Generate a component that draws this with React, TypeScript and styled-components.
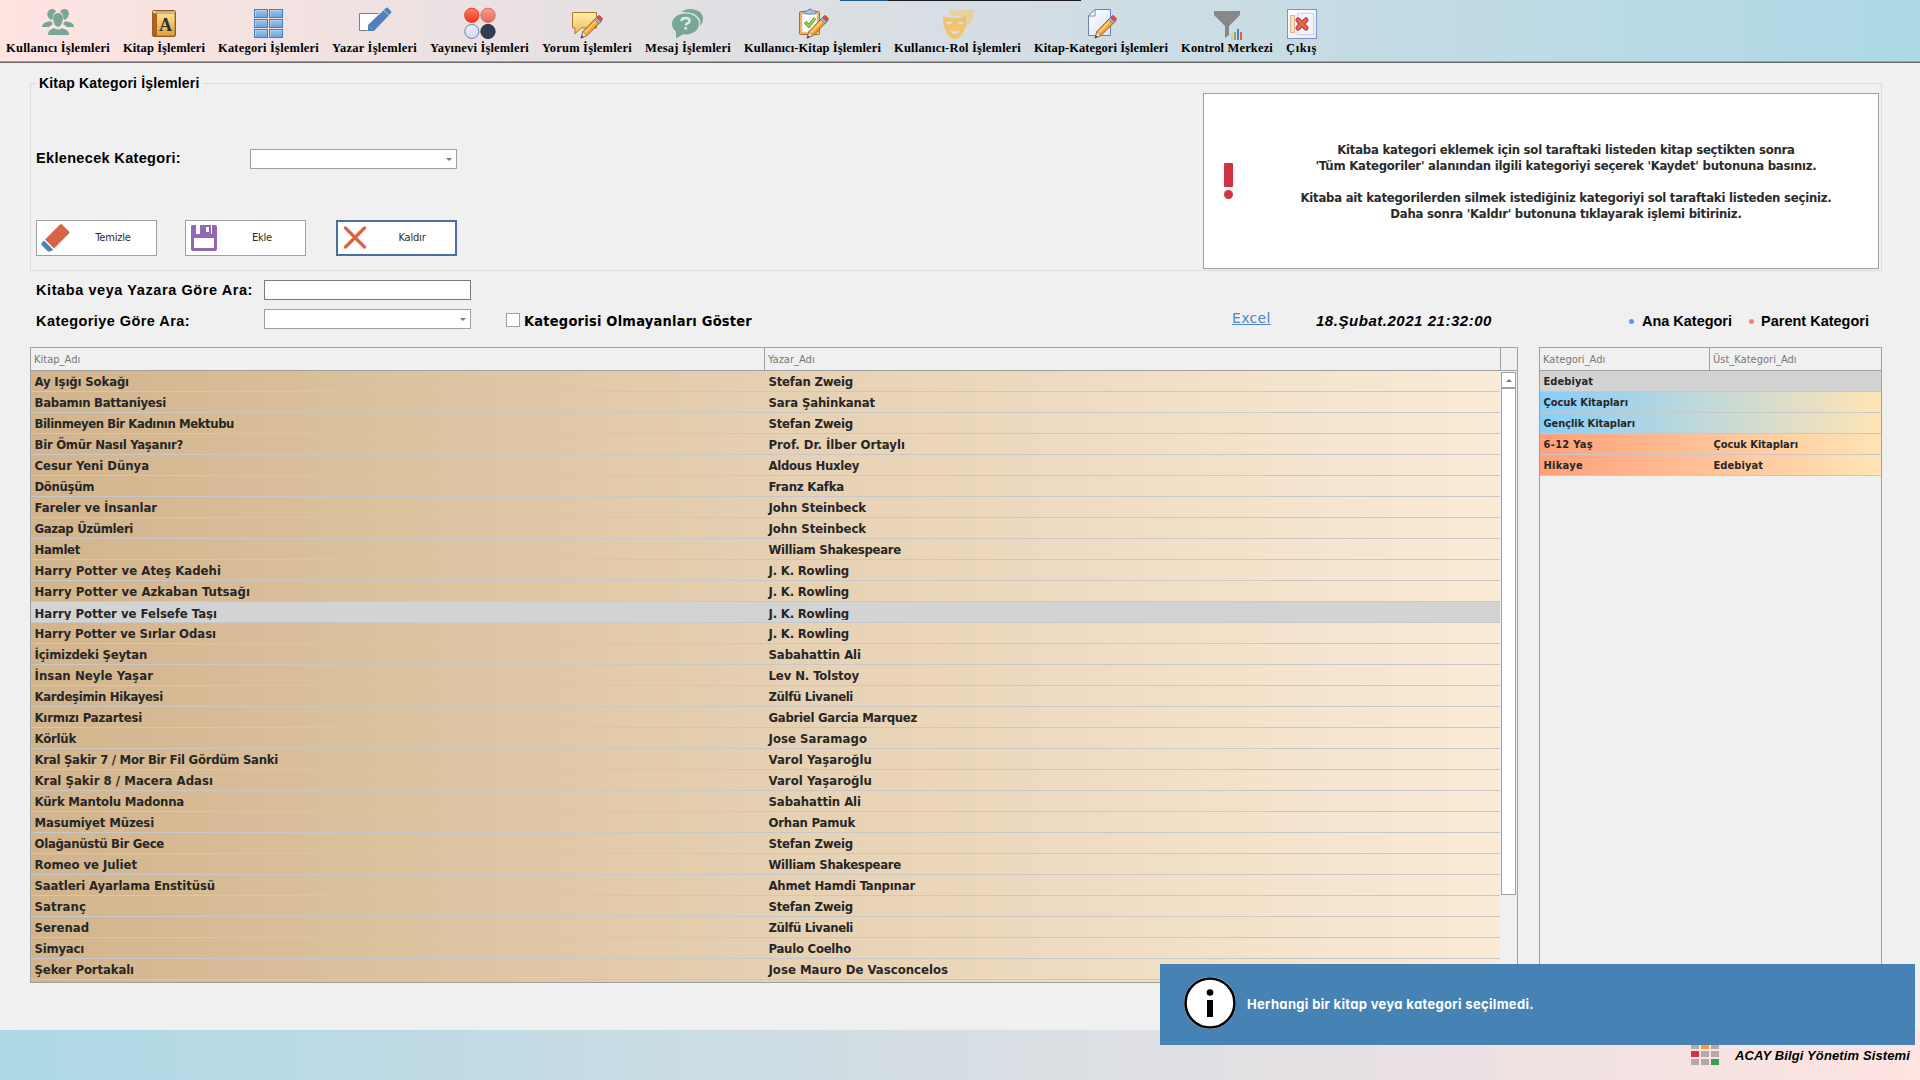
import React, { useLayoutEffect, useRef, useState } from 'react';
import styled, { createGlobalStyle } from 'styled-components';

const tahoma = `'DejaVu Sans Condensed', 'DejaVu Sans', sans-serif`;
const arial = `'Liberation Sans', Arial, sans-serif`;

const Global = createGlobalStyle`
  * { box-sizing: border-box; }
  body { margin: 0; background: #f0f0f0; overflow: hidden; }
`;

/* Tracks a line of text so that it fills the given width. */
const FitSpan = styled.span`
  display: inline-block;
  white-space: nowrap;
`;

function Fit({ width, children }: { width: number; children: string }) {
  const ref = useRef<HTMLSpanElement>(null);
  const [spacing, setSpacing] = useState<number | null>(null);
  useLayoutEffect(() => {
    if (spacing === null && ref.current) {
      const natural = ref.current.getBoundingClientRect().width;
      setSpacing((width - natural) / children.length);
    }
  }, [spacing, width, children]);
  return <FitSpan ref={ref} style={{ letterSpacing: spacing ?? 0 }}>{children}</FitSpan>;
}

const Screen = styled.div`
  position: relative;
  display: flex;
  flex-direction: column;
  width: 1920px;
  height: 1080px;
  background: #f0f0f0;
  color: #000;
  font-family: ${arial};
  overflow: hidden;
`;

/* ---------- toolbar ---------- */

const Toolbar = styled.nav`
  display: flex;
  flex: none;
  gap: 13px;
  height: 63px;
  padding: 7px 0 0 6px;
  background: linear-gradient(90deg, #ffe4e1, #add8e6);
  border-bottom: 1px solid #696969;
  box-shadow: inset 0 -1px 0 #a0a0a0;
`;

const TopEdge = styled.div`
  position: absolute;
  top: 0;
  left: 840px;
  width: 241px;
  height: 1px;
  background: linear-gradient(90deg, #215a80 48px, #1c1a1f 48px);
`;

const ToolItem = styled.div<{ $w: number }>`
  display: flex;
  flex-direction: column;
  align-items: center;
  flex: none;
  width: ${(p) => p.$w}px;
  svg { display: block; flex: none; }
`;

const ToolText = styled.span`
  font: bold 12.500px/16px 'Liberation Serif', 'Times New Roman', serif;
  white-space: nowrap;
  margin-top: -1px;
`;

const Svg = ({ children }: { children: React.ReactNode }) => (
  <svg width="34" height="34" viewBox="0 0 34 34">{children}</svg>
);

const UsersIcon = () => (
  <Svg>
    <g fill="#78a798">
      <path d="M8 3q3-2 6 0l1 2q-3 1-3 5l-1 3q-4-1-5-6zM19 5l1-2q4-2 7 0l1 4q-1 5-5 6l-1-3q0-4-3-5z" />
      <path d="M1 20q0-4 5-5l3-1q2 1 3 3-3 2-4 3zM33 20q0-4-5-5l-3-1q-2 1-3 3 3 2 4 3z" />
      <path d="M17 6q5 0 5 6-1 7-5 8-4-1-5-8 0-6 5-6z" />
      <path d="M7 28q0-5 4-6l2-1q4 3 8 0l2 1q5 1 5 6z" />
    </g>
  </Svg>
);
const BookIcon = () => (
  <Svg>
    <defs>
      <linearGradient id="bk" x1="0" y1="0" x2="0" y2="1"><stop stopColor="#fde18a" /><stop offset="1" stopColor="#e0a03c" /></linearGradient>
    </defs>
    <rect x="5.500" y="3.500" width="23" height="26" rx="1.500" fill="#fff" stroke="#9a5a1c" />
    <path d="M6 6h22v23H6z" fill="url(#bk)" stroke="#9a5a1c" strokeWidth=".8" />
    <path d="M5.500 5q0 2 4.500 1.500V29H7q-1.500 0-1.500-2z" fill="#a8642a" />
    <path d="M8 4.500h19" stroke="#9aa7c0" strokeWidth="1" />
    <text x="18.500" y="24" textAnchor="middle" fontFamily="Liberation Serif, serif" fontWeight="bold" fontSize="18" fill="#2f3238">A</text>
  </Svg>
);
const GridIcon = () => (
  <Svg>
    <defs><linearGradient id="gr" x1="0" y1="0" x2="0" y2="1"><stop stopColor="#9cc6ea" /><stop offset="1" stopColor="#6ba4dc" /></linearGradient></defs>
    {[2.5, 12.5, 22.5].map((y) => [2.5, 17.5].map((x) => (
      <g key={`${x}-${y}`}>
        <rect x={x} y={y} width="13" height="8" fill="url(#gr)" stroke="#3f7cc0" />
        <path d={`M${x + 1} ${y + 7}V${y + 1}H${x + 12}`} fill="none" stroke="#b9d8f2" strokeWidth=".8" />
      </g>
    )))}
  </Svg>
);
const EditIcon = () => (
  <Svg>
    <path d="M20.500 6.500h-19v17h9v-6z" fill="#fff" />
    <path d="M20.500 6.500h-19v17h8" fill="none" stroke="#7f7f7f" />
    <path d="M10 24v-6L28 1q1-1 2 0l3 3q1 1 0 2L16 24z" fill="#4c82bd" />
    <path d="M25.500 3l5.500 5.500" stroke="#c5d6e8" strokeWidth=".9" />
    <path d="M10.500 18.500l5 5" stroke="#7ea5d0" strokeWidth=".6" />
  </Svg>
);
const DotsIcon = () => (
  <Svg>
    <defs>
      <linearGradient id="d1" x1="0" y1="0" x2="0" y2="1"><stop stopColor="#ff7d5e" /><stop offset="1" stopColor="#f0371b" /></linearGradient>
      <linearGradient id="d2" x1="0" y1="0" x2="0" y2="1"><stop stopColor="#f5a08e" /><stop offset="1" stopColor="#e2685a" /></linearGradient>
      <linearGradient id="d3" x1="0" y1="0" x2="0" y2="1"><stop stopColor="#f0f3f8" /><stop offset="1" stopColor="#cfd9e8" /></linearGradient>
    </defs>
    <circle cx="8.800" cy="8.300" r="7.200" fill="url(#d1)" stroke="#d6301f" strokeWidth=".8" />
    <circle cx="25" cy="8.300" r="7.200" fill="url(#d2)" stroke="#d9594e" strokeWidth=".8" />
    <circle cx="8.800" cy="24.500" r="7" fill="url(#d3)" stroke="#6f7fb4" strokeWidth="1" />
    <circle cx="25" cy="24.500" r="7.200" fill="#333c50" stroke="#232a3b" strokeWidth=".8" />
  </Svg>
);
const Pencil = () => (
  <g>
    <path d="M11 31l2-6.500L26 11l4.500 4L17 28.500z" fill="#f1a63a" stroke="#8b5220" strokeWidth=".9" />
    <path d="M14.500 26L27 13" stroke="#ffdb8a" strokeWidth="1.300" />
    <path d="M11 31l2-6.500 4 4z" fill="#f6dfbd" stroke="#6f4a32" strokeWidth=".6" />
    <path d="M11 31l1-2.600 1.600 1.600z" fill="#333" />
    <path d="M24.500 12.500l2-2 4.500 4-2 2z" fill="#9fb2da" stroke="#5a6ea6" strokeWidth=".7" />
    <path d="M26.500 10.500l1.500-1.500q1-1 2 0l2 2q1 1 0 2L31 14.500z" fill="#e0504a" stroke="#a3302e" strokeWidth=".6" />
  </g>
);
const CommentIcon = () => (
  <Svg>
    <defs><linearGradient id="cm" x1="0" y1="0" x2="0" y2="1"><stop stopColor="#ffeeb0" /><stop offset="1" stopColor="#edbb55" /></linearGradient></defs>
    <path d="M2.500 5.500h24v15.500H11L5 27v-6H2.500z" fill="url(#cm)" stroke="#b07c2c" />
    <Pencil />
  </Svg>
);
const MessageIcon = () => (
  <Svg>
    <g fill="#78a798">
      <path d="M10 5Q14 2 20 2q12 1 12 10 0 4-3 7 1-5-1-8-5-7-18-6z" />
      <ellipse cx="14.500" cy="17" rx="13.500" ry="10.500" />
      <path d="M5 23v8.500L14 26z" />
    </g>
    <path d="M10.500 14q0-3 4-3t4 2.800q0 2-2.500 2.800-1.300.6-1.300 2" fill="none" stroke="#dfeae6" strokeWidth="2.400" />
    <rect x="13.300" y="20" width="2.800" height="2.500" fill="#dfeae6" />
  </Svg>
);
const ClipIcon = () => (
  <Svg>
    <rect x="3.500" y="4.500" width="20" height="23" rx="1" fill="#eeb45a" stroke="#a8702a" />
    <path d="M6 7h15v18H6z" fill="#fff" stroke="#c9cfdf" strokeWidth=".6" />
    <path d="M8 6V4h4q0-2 2-2t2 2h4v2q-1 1-3 1h-6q-2 0-3-1z" fill="#b7c2de" stroke="#6273a6" strokeWidth=".9" />
    <path d="M9 15l4 4 6-8" fill="none" stroke="#5e9f20" strokeWidth="3.200" /><path d="M9 15l4 4 6-8" fill="none" stroke="#a4d945" strokeWidth="1.500" />
    <Pencil />
  </Svg>
);
const MaskIcon = () => (
  <Svg>
    <path d="M9 2q6 3 13 1 5-1 11-1 0 9-4 15-2 3-6 4 2-5 2-11Q18 9 9 8z" fill="#e8d0a0" />
    <path d="M2 9q6 2 11 2 7 0 12-2 1 8-2 15-3 7-9 8-6-1-9-7Q2 18 2 9z" fill="#f0c36d" />
    <path d="M5 16q3-3 7 0l-3 1q-2 1-4-1zM16 16q3-3 7 0-2 2-4 1zM9 23q5 3 10 0-1 4-5 4t-5-4z" fill="#dbe0e6" />
  </Svg>
);
const PageIcon = () => (
  <Svg>
    <defs><linearGradient id="pg" x1="0" y1="0" x2="1" y2="1"><stop stopColor="#fff" /><stop offset="1" stopColor="#d9e2f5" /></linearGradient></defs>
    <path d="M11 2.500h15.500v26H4.500V9z" fill="url(#pg)" stroke="#6c7fb7" />
    <path d="M11 2.500V9H4.500z" fill="#fff" stroke="#6c7fb7" strokeWidth=".9" />
    <Pencil />
  </Svg>
);
const FunnelIcon = () => (
  <Svg>
    <path d="M4 4h26v4L19 19v9l-4 3V19L4 8z" fill="#868788" />
    <path d="M21 27h2v6h-2z" fill="#f0c36d" /><path d="M24 25h2v8h-2z" fill="#78a798" />
    <path d="M27 22h2v11h-2z" fill="#4c82bd" /><path d="M30 25h2v8h-2z" fill="#dd6344" />
  </Svg>
);
const ExitIcon = () => (
  <Svg>
    <defs><linearGradient id="ex" x1="0" y1="0" x2="1" y2="1"><stop stopColor="#fff" /><stop offset="1" stopColor="#e4eafa" /></linearGradient></defs>
    <rect x="2.500" y="2.500" width="29" height="29" fill="url(#ex)" stroke="#8291c0" />
    <rect x="5.500" y="8.500" width="4" height="17" fill="#fbe0c4" stroke="#e0b48e" />
    <rect x="12.500" y="6.500" width="16" height="21" fill="#f1f4fc" stroke="#c9d3ec" />
    <path d="M13 13l8 8M21 13l-8 8" stroke="#a82c27" strokeWidth="5" strokeLinecap="round" />
    <path d="M13 13l8 8M21 13l-8 8" stroke="#ea6255" strokeWidth="3.400" strokeLinecap="round" />
  </Svg>
);

const tools: [string, number, () => React.JSX.Element][] = [
  ['Kullanıcı İşlemleri', 104, UsersIcon],
  ['Kitap İşlemleri', 82, BookIcon],
  ['Kategori İşlemleri', 101, GridIcon],
  ['Yazar İşlemleri', 85, EditIcon],
  ['Yayınevi İşlemleri', 99, DotsIcon],
  ['Yorum İşlemleri', 90, CommentIcon],
  ['Mesaj İşlemleri', 86, MessageIcon],
  ['Kullanıcı-Kitap İşlemleri', 137, ClipIcon],
  ['Kullanıcı-Rol İşlemleri', 127, MaskIcon],
  ['Kitap-Kategori İşlemleri', 134, PageIcon],
  ['Kontrol Merkezi', 92, FunnelIcon],
  ['Çıkış', 31, ExitIcon],
];

/* ---------- form ---------- */

const Label = styled.span<{ $size?: number; $font?: string; $shift?: number }>`
  font: bold ${(p) => p.$size ?? 14.5}px/20px ${(p) => p.$font ?? arial};
  white-space: nowrap;
  margin-top: ${(p) => p.$shift ?? 0}px;
`;

const Group = styled.fieldset`
  display: flex;
  justify-content: space-between;
  flex: none;
  height: 196px;
  width: 1852px;
  margin: 12px 0 0 30px;
  padding: 0 2px 1px 5px;
  border: 1px solid #dcdcdc;
  min-width: 0;
`;

const Legend = styled.legend`
  height: 16px;
  padding: 0 3px;
  margin-left: 0;
  font: bold 14px/16px ${arial};
  white-space: nowrap;
`;

const GroupForm = styled.div`
  display: flex;
  flex-direction: column;
  justify-content: space-between;
  width: 421px;
  padding: 58px 0 13px;
`;

const FormRow = styled.div`
  display: flex;
  justify-content: space-between;
  align-items: center;
  height: 20px;
`;

const Buttons = styled.div`
  display: flex;
  gap: 28px;
  button:last-child { margin-left: 2px; }
`;

const Field = styled.div<{ $dark?: boolean }>`
  display: flex;
  align-items: center;
  justify-content: flex-end;
  width: 207px;
  height: 20px;
  padding-right: 4px;
  background: #fff;
  border: 1px solid ${(p) => (p.$dark ? '#7a7a7a' : '#a0a0a0')};
`;

const Caret = styled.i<{ $up?: boolean }>`
  width: 0;
  height: 0;
  border: 3px solid transparent;
  ${(p) => (p.$up
    ? 'border-top: 0; border-bottom-color: #777;'
    : 'border-bottom: 0; border-top-color: #777;')}
`;

const ActionButton = styled.button<{ $focus?: boolean }>`
  display: flex;
  align-items: center;
  flex: none;
  width: 121px;
  height: 36px;
  padding: 0 0 0 ${(p) => (p.$focus ? 1 : 3)}px;
  background: #fff;
  border: ${(p) => (p.$focus ? '2px solid #4a6da5' : '1px solid #a0a0a0')};
  color: #2b2b2b;
  font: 11px/14px ${tahoma};
  letter-spacing: -0.2px;
  svg { flex: none; }
  span { flex: 1; text-align: center; }
`;

const InfoBox = styled.div`
  display: flex;
  align-items: center;
  width: 676px;
  height: 176px;
  margin-top: 2px;
  padding-left: 20px;
  background: #fff;
  border: 1px solid #a0a0a0;
  p {
    flex: 1;
    margin: 2px 0 0;
    padding-left: 21px;
    text-align: center;
    white-space: pre;
    color: #2b2b2b;
    font: bold 13px/16px ${tahoma};
    letter-spacing: -0.24px;
  }
`;

/* ---------- filters ---------- */

const Filters = styled.div`
  display: flex;
  flex: none;
  height: 76px;
  padding: 9px 0 0 36px;
`;

const SearchFields = styled.div`
  display: flex;
  flex-direction: column;
  gap: 9px;
  width: 435px;
`;

const FilterLine = styled.div<{ $left: number; $top: number; $gap?: number }>`
  display: flex;
  flex: none;
  align-items: center;
  align-self: flex-start;
  gap: ${(p) => p.$gap ?? 0}px;
  height: 20px;
  margin: ${(p) => p.$top}px 0 0 ${(p) => p.$left}px;
`;

const CheckBox = styled.i`
  width: 14px;
  height: 14px;
  background: #fff;
  border: 1px solid #a0a0a0;
`;

const Excel = styled.a`
  width: 39px;
  color: #4a86c8;
  font: 14px/16px 'DejaVu Sans', sans-serif;
  letter-spacing: 0.3px;
  white-space: nowrap;
  text-decoration: underline;
`;

const Dated = styled.span`
  width: 176px;
  font: italic bold 15px/20px ${arial};
  white-space: nowrap;
`;

const Dot = styled.i<{ $color: string }>`
  width: 5px;
  height: 5px;
  border-radius: 50%;
  background: ${(p) => p.$color};
`;

/* ---------- grids ---------- */

const Grids = styled.div`
  display: flex;
  flex: none;
  gap: 21px;
  height: 636px;
  padding-left: 30px;
`;

const GridBox = styled.div<{ $w: number }>`
  display: flex;
  flex-direction: column;
  flex: none;
  width: ${(p) => p.$w}px;
  border: 1px solid #a0a0a0;
  overflow: hidden;
`;

const HeadRow = styled.div`
  display: flex;
  flex: none;
  height: 23px;
  border-bottom: 1px solid #a0a0a0;
`;

const HeadCell = styled.div<{ $w: number }>`
  flex: none;
  width: ${(p) => p.$w}px;
  padding: 0 3px;
  border-right: 1px solid #a0a0a0;
  color: #777;
  font: 11px/23px ${tahoma};
  letter-spacing: 0.02px;
  &:last-child { border-right: 0; }
`;

const GridBody = styled.div`
  display: flex;
  flex: 1;
  min-height: 0;
`;

const Rows = styled.div`
  flex: 1;
  overflow: hidden;
`;

const shades = {
  tan: 'linear-gradient(90deg, #d2b48c, #faebd7)',
  sky: 'linear-gradient(90deg, #87cefa, #ffe4b5)',
  salmon: 'linear-gradient(90deg, #ffa07a, #ffe4b5)',
  selected: '#d3d3d3',
};

const Row = styled.div<{ $shade: keyof typeof shades; $small?: boolean; $clip?: boolean }>`
  display: flex;
  height: 21px;
  border-bottom: 1px solid #c8c8c8;
  background: ${(p) => shades[p.$shade]};
  color: #262626;
  font: bold ${(p) => (p.$small ? '11px' : '13px')}/${(p) => (p.$clip ? 24 : p.$small ? 21 : 22)}px ${tahoma};
`;

const Cell = styled.div<{ $w: number; $clip?: boolean }>`
  flex: none;
  width: ${(p) => p.$w}px;
  height: ${(p) => (p.$clip ? 18 : 20)}px;
  padding-left: 3.500px;
  white-space: nowrap;
  overflow: hidden;
`;

const ScrollBar = styled.div`
  display: flex;
  flex-direction: column;
  width: 17px;
  padding: 1px 1px 0 1px;
`;

const ScrollUp = styled.div`
  display: flex;
  align-items: center;
  justify-content: center;
  height: 16px;
  background: #fff;
  border: 1px solid #a0a0a0;
`;

const Thumb = styled.div`
  height: 507px;
  background: #fff;
  border: 1px solid #a0a0a0;
`;

/* ---------- footer and toast ---------- */

const Footer = styled.footer`
  display: flex;
  justify-content: flex-end;
  flex: none;
  height: 50px;
  margin-top: auto;
  padding: 13px 9px 0 0;
  gap: 16px;
  background: linear-gradient(90deg, #add8e6, #ffe4e1);
`;

const Brand = styled.span`
  width: 176px;
  margin-top: 3px;
  font: italic bold 13px/20px ${arial};
  white-space: nowrap;
`;

const Toast = styled.div`
  position: absolute;
  left: 1160px;
  top: 964px;
  display: flex;
  align-items: center;
  gap: 10px;
  width: 755px;
  height: 81px;
  padding: 0 0 3px 23px;
  background: #4682b4;
  color: #fff;
  font: bold 13px/20px Inter, Lato, sans-serif;
  font-feature-settings: 'cv11';
  span { padding-top: 1px; }
`;

const books: [string, number, string][] = [
  ['Ay Işığı Sokağı', 95, 'Stefan Zweig'],
  ['Babamın Battaniyesi', 132, 'Sara Şahinkanat'],
  ['Bilinmeyen Bir Kadının Mektubu', 200, 'Stefan Zweig'],
  ['Bir Ömür Nasıl Yaşanır?', 149, 'Prof. Dr. İlber Ortaylı'],
  ['Cesur Yeni Dünya', 115, 'Aldous Huxley'],
  ['Dönüşüm', 60, 'Franz Kafka'],
  ['Fareler ve İnsanlar', 123, 'John Steinbeck'],
  ['Gazap Üzümleri', 99, 'John Steinbeck'],
  ['Hamlet', 46, 'William Shakespeare'],
  ['Harry Potter ve Ateş Kadehi', 187, 'J. K. Rowling'],
  ['Harry Potter ve Azkaban Tutsağı', 216, 'J. K. Rowling'],
  ['Harry Potter ve Felsefe Taşı', 183, 'J. K. Rowling'],
  ['Harry Potter ve Sırlar Odası', 182, 'J. K. Rowling'],
  ['İçimizdeki Şeytan', 113, 'Sabahattin Ali'],
  ['İnsan Neyle Yaşar', 119, 'Lev N. Tolstoy'],
  ['Kardeşimin Hikayesi', 129, 'Zülfü Livaneli'],
  ['Kırmızı Pazartesi', 108, 'Gabriel Garcia Marquez'],
  ['Körlük', 42, 'Jose Saramago'],
  ['Kral Şakir 7 / Mor Bir Fil Gördüm Sanki', 244, 'Varol Yaşaroğlu'],
  ['Kral Şakir 8 / Macera Adası', 179, 'Varol Yaşaroğlu'],
  ['Kürk Mantolu Madonna', 150, 'Sabahattin Ali'],
  ['Masumiyet Müzesi', 120, 'Orhan Pamuk'],
  ['Olağanüstü Bir Gece', 130, 'Stefan Zweig'],
  ['Romeo ve Juliet', 103, 'William Shakespeare'],
  ['Saatleri Ayarlama Enstitüsü', 181, 'Ahmet Hamdi Tanpınar'],
  ['Satranç', 52, 'Stefan Zweig'],
  ['Serenad', 55, 'Zülfü Livaneli'],
  ['Simyacı', 50, 'Paulo Coelho'],
  ['Şeker Portakalı', 100, 'Jose Mauro De Vasconcelos'],
];

const authorWidths: Record<string, number> = {
  'Stefan Zweig': 85,
  'Sara Şahinkanat': 107,
  'Prof. Dr. İlber Ortaylı': 137,
  'Aldous Huxley': 91,
  'Franz Kafka': 76,
  'John Steinbeck': 98,
  'William Shakespeare': 133,
  'J. K. Rowling': 81,
  'Sabahattin Ali': 93,
  'Lev N. Tolstoy': 91,
  'Zülfü Livaneli': 85,
  'Gabriel Garcia Marquez': 149,
  'Jose Saramago': 99,
  'Varol Yaşaroğlu': 104,
  'Orhan Pamuk': 87,
  'Ahmet Hamdi Tanpınar': 147,
  'Paulo Coelho': 83,
  'Jose Mauro De Vasconcelos': 180,
};

const categories: [string, string, keyof typeof shades][] = [
  ['Edebiyat', '', 'selected'],
  ['Çocuk Kitapları', '', 'sky'],
  ['Gençlik Kitapları', '', 'sky'],
  ['6-12 Yaş', 'Çocuk Kitapları', 'salmon'],
  ['Hikaye', 'Edebiyat', 'salmon'],
];

const categoryWidths: Record<string, number> = {
  Edebiyat: 50,
  'Çocuk Kitapları': 85,
  'Gençlik Kitapları': 92,
  '6-12 Yaş': 50,
  Hikaye: 40,
};

const help = `Kitaba kategori eklemek için sol taraftaki listeden kitap seçtikten sonra
'Tüm Kategoriler' alanından ilgili kategoriyi seçerek 'Kaydet' butonuna basınız.

Kitaba ait kategorilerden silmek istediğiniz kategoriyi sol taraftaki listeden seçiniz.
Daha sonra 'Kaldır' butonuna tıklayarak işlemi bitiriniz.`;

const SELECTED = 11;

export default function App() {
  return (
    <Screen>
      <Global />
      <Toolbar>
        {tools.map(([text, w, Icon]) => (
          <ToolItem key={text} $w={w}>
            <Icon />
            <ToolText><Fit width={w}>{text}</Fit></ToolText>
          </ToolItem>
        ))}
      </Toolbar>
      <TopEdge />

      <Group>
        <Legend><Fit width={160.5}>Kitap Kategori İşlemleri</Fit></Legend>
        <GroupForm>
          <FormRow>
            <Label $shift={-2}><Fit width={145}>Eklenecek Kategori:</Fit></Label>
            <Field><Caret /></Field>
          </FormRow>
          <Buttons>
            <ActionButton>
              <svg width="30" height="30" viewBox="0 0 30 30">
                <path d="M20 1.500q1-1 2 0l7 7q1 1 0 2L14 25.500l-9-9z" fill="#d96444" />
                <path d="M4 17.500l9 9-1 1q-1 1-2 1H8l-6.500-6.500v-2z" fill="#4c82bd" />
              </svg>
              <span>Temizle</span>
            </ActionButton>
            <ActionButton>
              <svg width="30" height="30" viewBox="0 0 30 30">
                <path fillRule="evenodd" d="M3 2h4v9h16V2h3q2 0 2 2v22q0 2-2 2H4q-2 0-2-2V4q0-2 1-2zM5 15v10h20V15z" fill="#9269b0" />
                <path fillRule="evenodd" d="M11 2h11v9H11zm6 2v5h3V4z" fill="#9269b0" />
              </svg>
              <span>Ekle</span>
            </ActionButton>
            <ActionButton $focus>
              <svg width="30" height="30" viewBox="0 0 30 30">
                <path d="M6.500 5l19 19M25.500 5l-19 19" stroke="#d96444" strokeWidth="3.200" strokeLinecap="round" />
              </svg>
              <span>Kaldır</span>
            </ActionButton>
          </Buttons>
        </GroupForm>
        <InfoBox>
          <svg width="9" height="38" viewBox="0 0 9 38">
            <rect x="0" y="1" width="9" height="24" rx="1" fill="#d13345" />
            <circle cx="4.500" cy="32.500" r="4.500" fill="#d13345" />
          </svg>
          <p>{help}</p>
        </InfoBox>
      </Group>

      <Filters>
        <SearchFields>
          <FormRow>
            <Label><Fit width={217}>Kitaba veya Yazara Göre Ara:</Fit></Label>
            <Field $dark />
          </FormRow>
          <FormRow>
            <Label $shift={4}><Fit width={154}>Kategoriye Göre Ara:</Fit></Label>
            <Field><Caret /></Field>
          </FormRow>
        </SearchFields>
        <FilterLine $left={35} $top={30} $gap={4}>
          <CheckBox />
          <Label $font={tahoma} $shift={1}><Fit width={228}>Kategorisi Olmayanları Göster</Fit></Label>
        </FilterLine>
        <FilterLine $left={480} $top={28}><Excel>Excel</Excel></FilterLine>
        <FilterLine $left={45} $top={31}><Dated><Fit width={176}>18.Şubat.2021 21:32:00</Fit></Dated></FilterLine>
        <FilterLine $left={137} $top={31} $gap={8}>
          <Dot $color="#6495ed" /><Label><Fit width={90}>Ana Kategori</Fit></Label>
        </FilterLine>
        <FilterLine $left={17} $top={31} $gap={7}>
          <Dot $color="#f08080" /><Label><Fit width={108}>Parent Kategori</Fit></Label>
        </FilterLine>
      </Filters>

      <Grids>
        <GridBox $w={1488}>
          <HeadRow>
            <HeadCell $w={734}>Kitap_Adı</HeadCell>
            <HeadCell $w={736}>Yazar_Adı</HeadCell>
            <HeadCell $w={16} />
          </HeadRow>
          <GridBody>
            <Rows>
              {books.map(([name, w, author], i) => (
                <Row key={name} $shade={i === SELECTED ? 'selected' : 'tan'} $clip={i === SELECTED}>
                  <Cell $w={734} $clip={i === SELECTED}><Fit width={w - 0.5}>{name}</Fit></Cell>
                  <Cell $w={735} $clip={i === SELECTED}><Fit width={authorWidths[author] - 0.5}>{author}</Fit></Cell>
                </Row>
              ))}
              <Row $shade="tan" />
            </Rows>
            <ScrollBar>
              <ScrollUp><Caret $up /></ScrollUp>
              <Thumb />
            </ScrollBar>
          </GridBody>
        </GridBox>
        <GridBox $w={343}>
          <HeadRow>
            <HeadCell $w={170}>Kategori_Adı</HeadCell>
            <HeadCell $w={171}>Üst_Kategori_Adı</HeadCell>
          </HeadRow>
          <Rows>
            {categories.map(([name, parent, shade]) => (
              <Row key={name} $shade={shade} $small>
                <Cell $w={170}><Fit width={categoryWidths[name] - 0.5}>{name}</Fit></Cell>
                <Cell $w={171}>{parent && <Fit width={categoryWidths[parent] - 0.5}>{parent}</Fit>}</Cell>
              </Row>
            ))}
          </Rows>
        </GridBox>
      </Grids>

      <Footer>
        <svg width="28" height="23" viewBox="0 0 28 23">
          {['#b3a9ab', '#f39b3d', '#b3a9ab', '#d13345', '#b3a9ab', '#b3a9ab', '#b3a9ab', '#b3a9ab', '#3a9a56'].map((c, i) => (
            <rect key={i} x={(i % 3) * 10} y={Math.floor(i / 3) * 8} width="8" height="6" fill={c} />
          ))}
        </svg>
        <Brand><Fit width={175}>ACAY Bilgi Yönetim Sistemi</Fit></Brand>
      </Footer>

      <Toast>
        <svg width="54" height="54" viewBox="0 0 54 54">
          <circle cx="27" cy="27" r="26" fill="#fff" />
          <circle cx="27" cy="27" r="24.500" fill="#fff" stroke="#000" strokeWidth="2.600" />
          <circle cx="27" cy="16.500" r="3.300" fill="#000" />
          <rect x="24" y="24" width="6" height="17" fill="#000" />
        </svg>
        <span><Fit width={287}>Herhangi bir kitap veya kategori seçilmedi.</Fit></span>
      </Toast>
    </Screen>
  );
}
